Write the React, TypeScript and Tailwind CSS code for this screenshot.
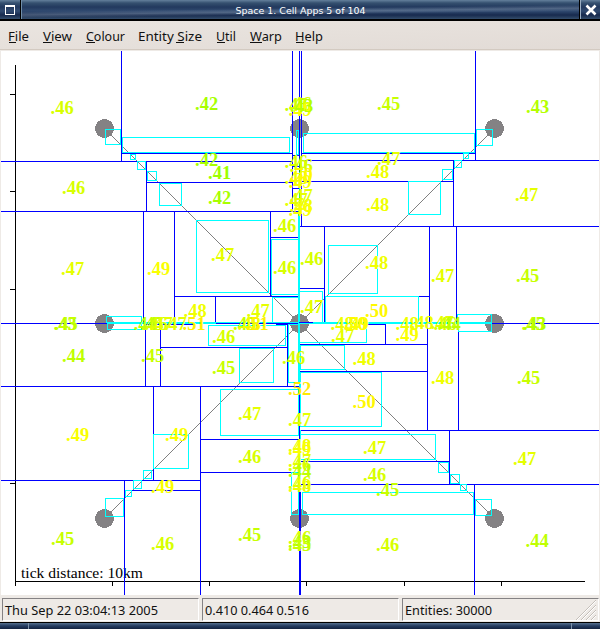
const BLUE: [number, number, number, number][] = [
  // verticals
  [121, 51, 121, 161], [292, 51, 292, 211], [299, 51, 299, 594], [301, 51, 301, 226],
  [475, 51, 475, 160], [146, 161, 146, 211], [453, 160, 453, 226], [143, 211, 143, 323],
  [174, 211, 174, 323], [270, 211, 270, 296], [324, 226, 324, 322], [429, 226, 429, 323],
  [456, 226, 456, 323], [215, 296, 215, 323], [145, 323, 145, 386], [160, 323, 160, 386],
  [287, 324, 287, 386], [385, 324, 385, 344], [427, 324, 427, 430], [458, 323, 458, 430],
  [153, 386, 153, 480], [200, 386, 200, 594], [124, 480, 124, 594], [300, 430, 300, 594],
  [449, 430, 449, 484], [474, 484, 474, 594],
  // horizontals
  [121, 153, 292, 153], [301, 153, 475, 153], [1, 161, 292, 161], [301, 160, 598, 160],
  [146, 182, 292, 182], [301, 181, 453, 181], [292, 155, 299, 155], [292, 166, 299, 166],
  [292, 188, 299, 188], [1, 211, 299, 211], [299, 226, 598, 226], [270, 237, 299, 237],
  [299, 288, 324, 288], [174, 296, 299, 296], [324, 296, 429, 296], [1, 323, 598, 323],
  [145, 324, 194, 324], [276, 324, 299, 324], [366, 324, 385, 324], [160, 347, 287, 347],
  [299, 344, 427, 344], [299, 371, 427, 371], [1, 386, 299, 386], [299, 430, 598, 430],
  [200, 439, 299, 439], [300, 461, 449, 461], [200, 472, 299, 472], [1, 480, 200, 480],
  [300, 484, 598, 484], [124, 490, 200, 490],
];

const CYAN: [number, number, number, number][] = [
  [105, 129, 120, 144], [122, 137, 289, 152], [130, 154, 135, 159], [137, 161, 145, 169],
  [147, 171, 156, 180], [159, 183, 181, 205], [196, 220, 268, 292], [271, 239, 298, 294],
  [296, 130, 298, 154], [303, 133, 474, 152], [476, 129, 492, 145], [463, 153, 468, 158],
  [454, 160, 461, 167], [442, 169, 452, 179], [408, 181, 440, 214], [328, 245, 377, 293],
  [272, 297, 298, 322], [299, 291, 322, 322], [325, 296, 418, 322], [106, 316, 141, 322],
  [107, 322, 141, 329], [208, 325, 285, 345], [239, 348, 273, 382], [288, 324, 298, 382],
  [299, 323, 366, 342], [300, 345, 344, 369], [300, 372, 381, 426], [220, 389, 298, 435],
  [153, 434, 188, 468], [143, 470, 151, 478], [133, 480, 141, 488], [125, 490, 131, 496],
  [105, 498, 123, 516], [291, 472, 298, 514], [302, 492, 473, 514], [300, 434, 435, 459],
  [438, 462, 448, 472], [450, 474, 459, 483], [460, 484, 466, 490], [475, 499, 491, 515],
  [457, 314, 491, 322], [458, 322, 491, 331],
  [299, 172, 299, 323], [298, 211, 298, 323], [299, 324, 299, 386], [107, 322, 491, 322],
  [107, 323, 215, 323], [313, 323, 491, 323], [300, 430, 300, 491],
];

const LABELS: [string, number, number][] = [
  ['.46', 51, 114], ['.46', 62.5, 194], ['.42', 195.5, 110], ['.42', 195.5, 165.5],
  ['.41', 208.5, 179], ['.42', 208.5, 204], ['.45', 377.5, 110], ['.43', 526.5, 113],
  ['.47', 377.5, 165], ['.48', 366.5, 178], ['.48', 366.5, 211], ['.47', 515.5, 201],
  ['.47', 61.5, 275], ['.49', 147.5, 275], ['.44', 62.5, 362], ['.45', 141.5, 362],
  ['.46', 273.5, 232], ['.47', 211.5, 261], ['.46', 273.5, 274], ['.46', 300.5, 265],
  ['.47', 300.5, 313], ['.47', 247, 317], ['.48', 184, 317], ['.46', 212.5, 343],
  ['.45', 212.5, 374], ['.46', 282.5, 364], ['.52', 288.5, 395], ['.48', 365.5, 269],
  ['.50', 365.5, 317], ['.47', 331.5, 342], ['.48', 353, 365], ['.50', 353, 408],
  ['.47', 431.5, 282], ['.45', 516.5, 282], ['.49', 396, 341], ['.48', 431.5, 384],
  ['.45', 517.5, 384], ['.49', 66.5, 441], ['.49', 165.5, 441], ['.49', 151.5, 493],
  ['.45', 51.5, 545], ['.46', 151.5, 550], ['.47', 238.5, 420], ['.46', 238.5, 463],
  ['.45', 238.5, 541], ['.47', 288.5, 426], ['.47', 363.5, 454], ['.46', 363.5, 481],
  ['.47', 513.5, 465], ['.45', 376.5, 496], ['.46', 376.5, 551], ['.44', 526, 547],
  // crowded bands along the centre lines
  ['.43', 54, 330], ['.45', 55, 330],
  ['.44', 134, 330], ['.45', 141, 330], ['.46', 145, 330], ['.47', 150, 330], ['.47', 164, 330], ['.51', 183, 330],
  ['.45', 233.5, 330], ['.48', 238, 330], ['.51', 246, 330],
  ['.48', 331, 330], ['.50', 344, 330], ['.49', 346, 330],
  ['.48', 396, 330], ['.48', 411, 329], ['.47', 431, 329], ['.46', 434, 330], ['.44', 438, 330],
  ['.45', 522, 330], ['.43', 523.5, 330],
  ['.45', 285, 111], ['.46', 289, 110], ['.49', 289, 116], ['.43', 290.5, 112],
  ['.46', 285, 168], ['.46', 290, 172], ['.48', 285, 184], ['.50', 290, 181], ['.49', 289, 188],
  ['.47', 290, 202], ['.47', 285, 206], ['.48', 290, 212], ['.49', 289, 216],
  ['.48', 288.5, 452], ['.49', 288.5, 455], ['.47', 288.5, 467], ['.46', 288.5, 471], ['.44', 288.5, 477],
  ['.46', 288.5, 489], ['.48', 288.5, 492],
  ['.46', 288.5, 544], ['.43', 288.5, 548], ['.45', 288.5, 551],
];

const COLOURS: Record<string, string> = {
  '.41': '#9dff00', '.42': '#a8ff00', '.43': '#b4ff00', '.44': '#bfff00', '.45': '#c8ff00',
  '.46': '#d8ff00', '.47': '#e6ff00', '.48': '#f0ff00', '.49': '#faff00', '.50': '#fff800',
  '.51': '#fff000', '.52': '#ffea00',
};

// line: start and width of the access key underline
const MENU = [
  { label: 'File', at: 8, w: 21, line: [9, 7] },
  { label: 'View', at: 43, w: 29, line: [43, 9] },
  { label: 'Colour', at: 86, w: 39, line: [86, 9] },
  { label: 'Entity Size', at: 138, w: 64, line: [176, 8] },
  { label: 'Util', at: 216, w: 20, line: [217, 8] },
  { label: 'Warp', at: 250, w: 32, line: [250, 12] },
  { label: 'Help', at: 295, w: 28, line: [296, 8] },
];

function TitleBar() {
  return (
    <div className="flex h-[21px] border-b-2 border-black bg-[linear-gradient(180deg,#64809c_0,#35506f_3px,#22395e_7px,#304a70_11px,#172a4e_15px,#344d6b_19px)] text-white">
      <div className="flex w-5 items-center justify-center">
        <div className="h-[10px] w-[10px] border border-t-2 border-white" />
      </div>
      <div className="w-px bg-black" />
      <div className="flex-1 border-l border-[#6f8da9] bg-[linear-gradient(179.3deg,transparent_45%,#8ea0b566_58%,transparent_70%)]">
        <svg width="540" height="19" className="block font-['DejaVu_Sans'] text-[9.5px]" fill="#fff">
          <text x="213.5" y="14" textLength="130" lengthAdjust="spacingAndGlyphs">Space 1. Cell Apps 5 of 104</text>
        </svg>
      </div>
      <div className="w-px bg-black" />
      <div className="flex w-[20px] items-center justify-center border-l border-[#9baec2]">
        <svg width="12" height="12" viewBox="0 0 12 12">
          <path d="M1.5 1.5L10.5 10.5M10.5 1.5L1.5 10.5" stroke="#fff" strokeWidth="2.6" />
        </svg>
      </div>
    </div>
  );
}

function MenuBar() {
  return (
    <div className="h-[30px] border-b border-[#eeeae6] bg-gradient-to-br from-[#eae5e0] to-[#e2dbd6]">
      <svg width="600" height="29" className="block border-b border-[#d3cac1] font-['Noto_Sans'] text-[13px]" fill="#111">
        {MENU.map((m) => (
          <g key={m.label}>
            <text x={m.at} y="20" textLength={m.w} lengthAdjust="spacingAndGlyphs">{m.label}</text>
            <rect x={m.line[0]} y="21" width={m.line[1]} height="1" />
          </g>
        ))}
      </svg>
    </div>
  );
}

function SpaceMap() {
  return (
    <svg width="598" height="544" viewBox="1 51 598 544" className="mx-px block bg-white">
      <path
        shapeRendering="crispEdges"
        fill="none"
        stroke="#000"
        d="M15.5 65V586M15 581.5H585M10 94.5H15M10 191.5H15M10 289.5H15M10 386.5H15M10 483.5H15M112.5 581V586M209.5 581V586M306.5 581V586M404.5 581V586M501.5 581V586"
      />
      <text x="21" y="578" textLength="122" lengthAdjust="spacingAndGlyphs" className="font-['Liberation_Serif'] text-[15px]">tick distance: 10km</text>
      <g shapeRendering="crispEdges" fill="#848284">
        {[128.5, 323.5, 518.5].map((y) =>
          [104.5, 299.5, 494.5].map((x) => <circle key={`${x}-${y}`} cx={x} cy={y} r="9.5" />),
        )}
      </g>
      <path shapeRendering="crispEdges" stroke="#808080" d="M104.5 128.5L494.5 518.5M494.5 128.5L104.5 518.5" />
      <g shapeRendering="crispEdges" fill="#00f">
        {BLUE.map(([a, b, c, d], i) => <rect key={i} x={a} y={b} width={c - a + 1} height={d - b + 1} />)}
      </g>
      <g shapeRendering="crispEdges" fill="none" stroke="#0ff">
        {CYAN.map(([a, b, c, d], i) =>
          a === c || b === d
            ? <rect key={i} x={a} y={b} width={c - a + 1} height={d - b + 1} fill="#0ff" stroke="none" />
            : <rect key={i} x={a + 0.5} y={b + 0.5} width={c - a} height={d - b} />,
        )}
      </g>
      <g shapeRendering="crispEdges" fill="#00f">
        <rect x="299" y="493" width="2" height="102" />
        <rect x="299" y="322" width="14" height="1" />
      </g>
      <g className="font-['Liberation_Serif'] text-[18.5px] font-bold">
        {LABELS.map(([t, x, y], i) => <text key={i} x={x - 0.5} y={y} fill={COLOURS[t]}>{t}</text>)}
      </g>
    </svg>
  );
}

function StatusBar() {
  const cell = 'h-[23px] border border-t-[#848284] border-l-[#848284] border-b-white border-r-white';
  return (
    <div className="flex h-[27px] gap-[3px] pt-[3px] pr-[1px] pl-[2px]">
      <svg className={`${cell} w-[197px]`} fill="#111"><text x="2" y="16" textLength="153" lengthAdjust="spacingAndGlyphs" className="font-['Noto_Sans'] text-[13px]">Thu Sep 22 03:04:13 2005</text></svg>
      <svg className={`${cell} w-[197px]`} fill="#111"><text x="2" y="16" textLength="104" lengthAdjust="spacingAndGlyphs" className="font-['Noto_Sans'] text-[13px]">0.410 0.464 0.516</text></svg>
      <svg className={`${cell} w-[197px]`} fill="#111">
        <text x="2" y="16" textLength="87" lengthAdjust="spacingAndGlyphs" className="font-['Noto_Sans'] text-[13px]">Entities: 30000</text>
        <path d="M173 21L193 1M178 21L193 6M183 21L193 11M188 21L193 16" stroke="#c4beb8" />
        <path d="M174 21L193 2M179 21L193 7M184 21L193 12M189 21L193 17" stroke="#fff" />
      </svg>
    </div>
  );
}

export default function App() {
  return (
    <div className="h-[629px] w-[600px] overflow-hidden bg-[#eeeae6]">
      <TitleBar />
      <MenuBar />
      <SpaceMap />
      <StatusBar />
      <div className="flex h-[7px] border-t border-black bg-[linear-gradient(180deg,#56708d,#233b61_50%,#14233f)]">
        <div className="w-[29px] border-r border-[#7d93ab]" />
        <div className="flex-1" />
        <div className="w-[29px] border-l border-[#7d93ab]" />
      </div>
    </div>
  );
}
